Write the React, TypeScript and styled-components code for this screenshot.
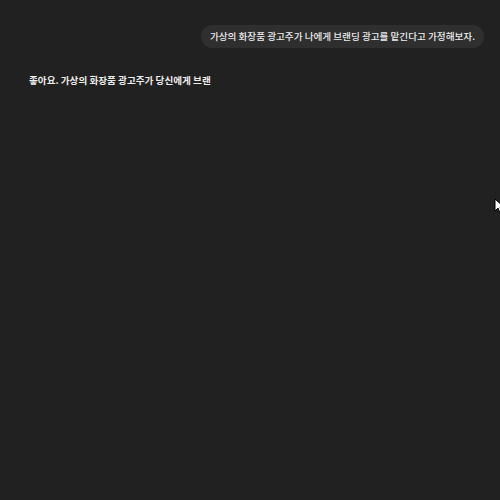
import React from "react";
import styled, { createGlobalStyle } from "styled-components";

const Global = createGlobalStyle`
  html, body { margin: 0; padding: 0; background: #212121; }
  body { font-family: "Noto Sans CJK KR", "Noto Sans", sans-serif; }
  #root { min-height: 100vh; }
`;

const Page = styled.div`
  position: relative;
  width: 500px;
  height: 500px;
  overflow: hidden;
  background: #212121;
  display: flex;
  flex-direction: column;
  padding: 25px 16px 0 29px;
  box-sizing: border-box;
`;

const UserRow = styled.div`
  display: flex;
  justify-content: flex-end;
`;

const Bubble = styled.div`
  background: #2f2f2f;
  color: #ececec;
  font-size: 9.6px;
  font-weight: 500;
  line-height: 23px;
  height: 23px;
  padding: 0 9px;
  border-radius: 12px;
  white-space: nowrap;
`;

const Answer = styled.div`
  margin-top: 25px;
  color: #ececec;
  font-size: 9.6px;
  font-weight: 700;
  line-height: 14px;
`;

const Cursor = styled.svg`
  position: absolute;
  left: 494px;
  top: 198px;
`;

export default function App() {
  return (
    <>
      <Global />
      <Page>
        <UserRow>
          <Bubble>가상의 화장품 광고주가 나에게 브랜딩 광고를 맡긴다고 가정해보자.</Bubble>
        </UserRow>
        <Answer>좋아요. 가상의 화장품 광고주가 당신에게 브랜</Answer>
        <Cursor width="10" height="16" viewBox="0 0 10 16">
          <path d="M1 1 L1 13 L4 10 L6 15 L8 14 L6 9 L10 9 Z" fill="#fff" stroke="#000" strokeWidth="1" />
        </Cursor>
      </Page>
    </>
  );
}
